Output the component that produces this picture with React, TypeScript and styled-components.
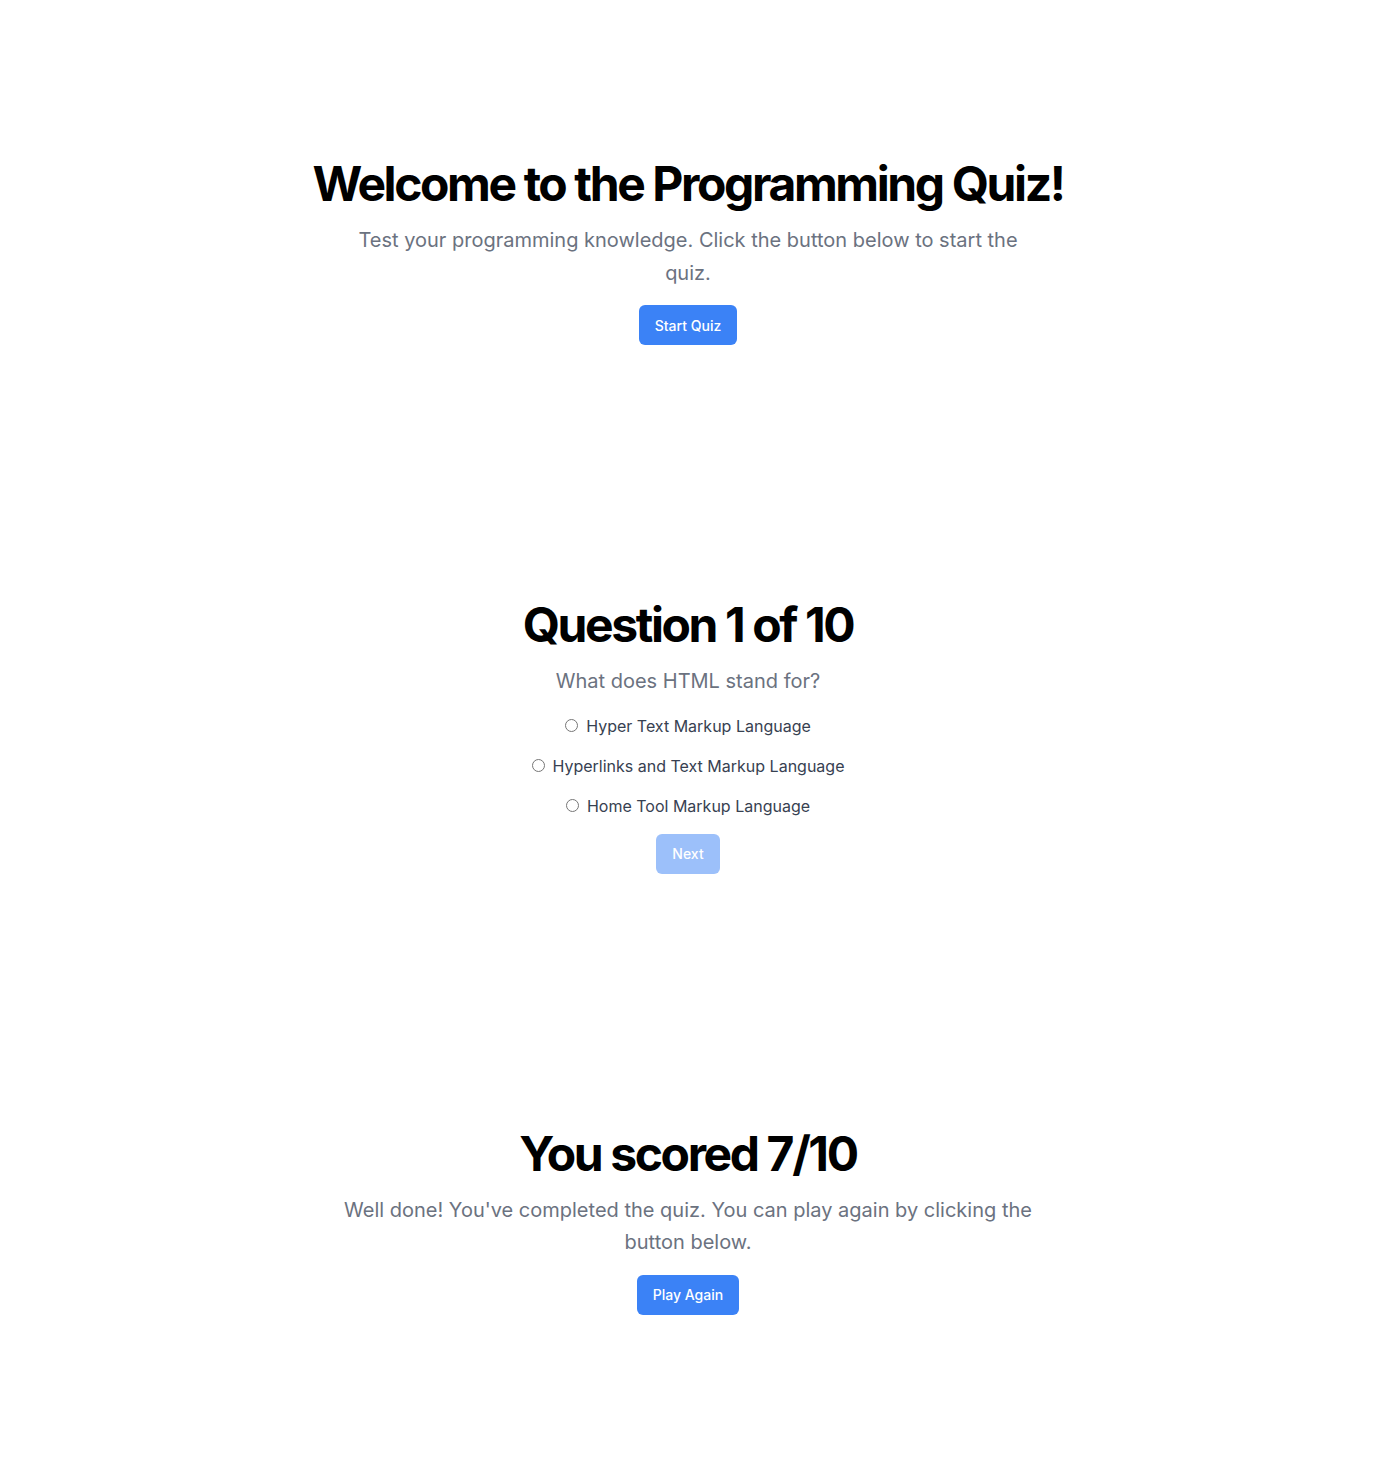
import { createGlobalStyle, styled } from "styled-components";

const GlobalStyle = createGlobalStyle`
  * {
    box-sizing: border-box;
  }
  body {
    margin: 0;
    background: #fff;
    font-family: Inter, "Noto Sans", Arial, sans-serif;
    color: #000;
  }
`;

const Page = styled.main`
  display: flex;
  flex-direction: column;
  padding: 32px 0;
`;

const Section = styled.section`
  width: 100%;
  padding: 128px 24px;
  display: flex;
  flex-direction: column;
  align-items: center;
  text-align: center;
  gap: 16px;
`;

const Title = styled.h1`
  margin: 0;
  font-size: 48px;
  line-height: 1;
  font-weight: 700;
  letter-spacing: -0.05em;
`;

const Lead = styled.p`
  margin: 0;
  max-width: 700px;
  color: #6b7280;
  font-size: 20px;
  line-height: 1.625;
`;

const Options = styled.div`
  display: flex;
  flex-direction: column;
  align-items: center;
  gap: 16px;
`;

const Option = styled.label`
  display: flex;
  align-items: center;
  gap: 8px;
  font-size: 16px;
  line-height: 24px;
  color: #374151;
  input {
    margin: 0;
    width: 13px;
    height: 13px;
  }
`;

const Button = styled.button`
  height: 40px;
  padding: 0 16px;
  border: none;
  border-radius: 6px;
  background: #3b82f6;
  color: #fff;
  font-family: inherit;
  font-size: 14px;
  font-weight: 500;
  cursor: pointer;
  &:disabled {
    opacity: 0.5;
    cursor: default;
  }
`;

const answers = [
  "Hyper Text Markup Language",
  "Hyperlinks and Text Markup Language",
  "Home Tool Markup Language",
];

export default function App() {
  return (
    <>
      <GlobalStyle />
      <Page>
        <Section>
          <Title>Welcome to the Programming Quiz!</Title>
          <Lead>
            Test your programming knowledge. Click the button below to start the quiz.
          </Lead>
          <Button>Start Quiz</Button>
        </Section>
        <Section>
          <Title>Question 1 of 10</Title>
          <Lead>What does HTML stand for?</Lead>
          <Options>
            {answers.map((a) => (
              <Option key={a}>
                <input type="radio" name="answer" value={a} />
                {a}
              </Option>
            ))}
          </Options>
          <Button disabled>Next</Button>
        </Section>
        <Section>
          <Title>You scored 7/10</Title>
          <Lead>
            Well done! You've completed the quiz. You can play again by clicking the button below.
          </Lead>
          <Button>Play Again</Button>
        </Section>
      </Page>
    </>
  );
}
